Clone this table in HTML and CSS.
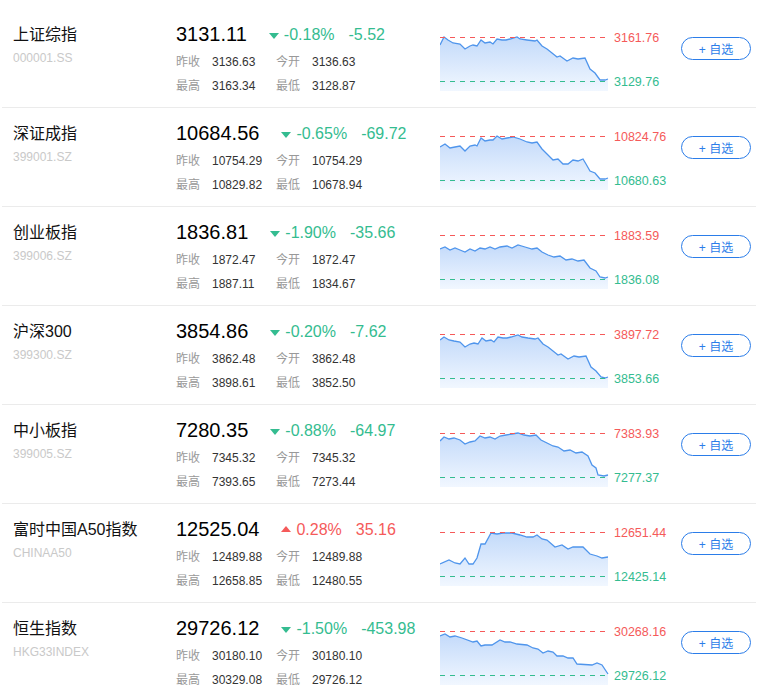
FILE: index.html
```html
<!DOCTYPE html>
<html lang="zh-CN">
<head>
  <meta charset="UTF-8">
  <meta name="viewport" content="width=device-width, initial-scale=1.0">
  <title>指数行情</title>
  <link rel="stylesheet" href="styles.css">
</head>
<body>
  <div class="list">

    <div class="row">
      <div class="name">
        <div class="title">上证综指</div>
        <div class="code">000001.SS</div>
      </div>
      <div class="quote">
        <div class="top">
          <span class="price">3131.11</span>
          <span class="arrow fall"></span>
          <span class="pct down">-0.18%</span>
          <span class="chg down">-5.52</span>
        </div>
        <div class="stats">
          <span class="k">昨收</span><span class="v">3136.63</span><span class="k">今开</span><span class="v">3136.63</span>
          <span class="k">最高</span><span class="v">3163.34</span><span class="k">最低</span><span class="v">3128.87</span>
        </div>
      </div>
      <div class="chart">
        <svg width="170" height="56" viewBox="0 0 170 56">
          <defs><linearGradient id="g1" x1="0" y1="0" x2="0" y2="1"><stop offset="0" stop-color="#c3dafa"/><stop offset="1" stop-color="#f1f7ff"/></linearGradient></defs>
          <polygon fill="url(#g1)" points="0,10 4,2 8,5 13,8 20,9 25,14 30,11 33,10 37,11 41,5 45,8 50,7 53,9 57,4 62,5 66,5 70,4 77,2 80,4 87,5 95,6 97,5 102,11 107,14 112,18 117,22 120,21 127,26 133,23 138,24 145,23 150,34 155,38 160,45 165,45 168,44 168,56 0,56"/>
          <polyline class="line" points="0,10 4,2 8,5 13,8 20,9 25,14 30,11 33,10 37,11 41,5 45,8 50,7 53,9 57,4 62,5 66,5 70,4 77,2 80,4 87,5 95,6 97,5 102,11 107,14 112,18 117,22 120,21 127,26 133,23 138,24 145,23 150,34 155,38 160,45 165,45 168,44"/>
          <line class="hiline" x1="0" y1="2.5" x2="166" y2="2.5"/>
          <line class="loline" x1="0" y1="46.5" x2="166" y2="46.5"/>
        </svg>
        <div class="marks"><span class="hi">3161.76</span><span class="lo">3129.76</span></div>
      </div>
      <button class="add">+ 自选</button>
    </div>

    <div class="row">
      <div class="name">
        <div class="title">深证成指</div>
        <div class="code">399001.SZ</div>
      </div>
      <div class="quote">
        <div class="top">
          <span class="price">10684.56</span>
          <span class="arrow fall"></span>
          <span class="pct down">-0.65%</span>
          <span class="chg down">-69.72</span>
        </div>
        <div class="stats">
          <span class="k">昨收</span><span class="v">10754.29</span><span class="k">今开</span><span class="v">10754.29</span>
          <span class="k">最高</span><span class="v">10829.82</span><span class="k">最低</span><span class="v">10678.94</span>
        </div>
      </div>
      <div class="chart">
        <svg width="170" height="56" viewBox="0 0 170 56">
          <defs><linearGradient id="g2" x1="0" y1="0" x2="0" y2="1"><stop offset="0" stop-color="#c3dafa"/><stop offset="1" stop-color="#f1f7ff"/></linearGradient></defs>
          <polygon fill="url(#g2)" points="0,13 5,10 10,14 15,13 20,12 25,17 30,12 35,11 37,12 41,4 45,7 50,6 53,6 57,2 62,5 67,4 73,3 80,5 87,8 92,9 97,8 102,15 107,20 113,26 118,25 123,30 128,30 133,26 138,27 143,25 146,30 150,37 155,39 160,45 165,45 168,44 168,56 0,56"/>
          <polyline class="line" points="0,13 5,10 10,14 15,13 20,12 25,17 30,12 35,11 37,12 41,4 45,7 50,6 53,6 57,2 62,5 67,4 73,3 80,5 87,8 92,9 97,8 102,15 107,20 113,26 118,25 123,30 128,30 133,26 138,27 143,25 146,30 150,37 155,39 160,45 165,45 168,44"/>
          <line class="hiline" x1="0" y1="2.5" x2="166" y2="2.5"/>
          <line class="loline" x1="0" y1="46.5" x2="166" y2="46.5"/>
        </svg>
        <div class="marks"><span class="hi">10824.76</span><span class="lo">10680.63</span></div>
      </div>
      <button class="add">+ 自选</button>
    </div>

    <div class="row">
      <div class="name">
        <div class="title">创业板指</div>
        <div class="code">399006.SZ</div>
      </div>
      <div class="quote">
        <div class="top">
          <span class="price">1836.81</span>
          <span class="arrow fall"></span>
          <span class="pct down">-1.90%</span>
          <span class="chg down">-35.66</span>
        </div>
        <div class="stats">
          <span class="k">昨收</span><span class="v">1872.47</span><span class="k">今开</span><span class="v">1872.47</span>
          <span class="k">最高</span><span class="v">1887.11</span><span class="k">最低</span><span class="v">1834.67</span>
        </div>
      </div>
      <div class="chart">
        <svg width="170" height="56" viewBox="0 0 170 56">
          <defs><linearGradient id="g3" x1="0" y1="0" x2="0" y2="1"><stop offset="0" stop-color="#c3dafa"/><stop offset="1" stop-color="#f1f7ff"/></linearGradient></defs>
          <polygon fill="url(#g3)" points="0,16 5,14 10,17 15,15 20,17 25,19 30,16 35,18 40,15 45,16 50,14 55,16 60,14 67,13 72,15 78,12 85,14 92,16 97,15 102,19 108,22 114,24 120,23 126,27 132,26 138,28 144,27 150,35 156,38 160,44 165,45 168,44 168,56 0,56"/>
          <polyline class="line" points="0,16 5,14 10,17 15,15 20,17 25,19 30,16 35,18 40,15 45,16 50,14 55,16 60,14 67,13 72,15 78,12 85,14 92,16 97,15 102,19 108,22 114,24 120,23 126,27 132,26 138,28 144,27 150,35 156,38 160,44 165,45 168,44"/>
          <line class="hiline" x1="0" y1="2.5" x2="166" y2="2.5"/>
          <line class="loline" x1="0" y1="46.5" x2="166" y2="46.5"/>
        </svg>
        <div class="marks"><span class="hi">1883.59</span><span class="lo">1836.08</span></div>
      </div>
      <button class="add">+ 自选</button>
    </div>

    <div class="row">
      <div class="name">
        <div class="title">沪深300</div>
        <div class="code">399300.SZ</div>
      </div>
      <div class="quote">
        <div class="top">
          <span class="price">3854.86</span>
          <span class="arrow fall"></span>
          <span class="pct down">-0.20%</span>
          <span class="chg down">-7.62</span>
        </div>
        <div class="stats">
          <span class="k">昨收</span><span class="v">3862.48</span><span class="k">今开</span><span class="v">3862.48</span>
          <span class="k">最高</span><span class="v">3898.61</span><span class="k">最低</span><span class="v">3852.50</span>
        </div>
      </div>
      <div class="chart">
        <svg width="170" height="56" viewBox="0 0 170 56">
          <defs><linearGradient id="g4" x1="0" y1="0" x2="0" y2="1"><stop offset="0" stop-color="#c3dafa"/><stop offset="1" stop-color="#f1f7ff"/></linearGradient></defs>
          <polygon fill="url(#g4)" points="0,8 4,5 9,8 14,9 20,10 25,15 30,12 34,11 38,12 42,6 46,9 51,8 54,10 58,5 63,6 67,6 71,5 78,3 82,5 88,6 95,7 98,6 103,12 108,15 113,19 118,23 121,22 128,27 134,24 139,25 146,24 151,35 156,39 161,45 165,46 168,45 168,56 0,56"/>
          <polyline class="line" points="0,8 4,5 9,8 14,9 20,10 25,15 30,12 34,11 38,12 42,6 46,9 51,8 54,10 58,5 63,6 67,6 71,5 78,3 82,5 88,6 95,7 98,6 103,12 108,15 113,19 118,23 121,22 128,27 134,24 139,25 146,24 151,35 156,39 161,45 165,46 168,45"/>
          <line class="hiline" x1="0" y1="2.5" x2="166" y2="2.5"/>
          <line class="loline" x1="0" y1="46.5" x2="166" y2="46.5"/>
        </svg>
        <div class="marks"><span class="hi">3897.72</span><span class="lo">3853.66</span></div>
      </div>
      <button class="add">+ 自选</button>
    </div>

    <div class="row">
      <div class="name">
        <div class="title">中小板指</div>
        <div class="code">399005.SZ</div>
      </div>
      <div class="quote">
        <div class="top">
          <span class="price">7280.35</span>
          <span class="arrow fall"></span>
          <span class="pct down">-0.88%</span>
          <span class="chg down">-64.97</span>
        </div>
        <div class="stats">
          <span class="k">昨收</span><span class="v">7345.32</span><span class="k">今开</span><span class="v">7345.32</span>
          <span class="k">最高</span><span class="v">7393.65</span><span class="k">最低</span><span class="v">7273.44</span>
        </div>
      </div>
      <div class="chart">
        <svg width="170" height="56" viewBox="0 0 170 56">
          <defs><linearGradient id="g5" x1="0" y1="0" x2="0" y2="1"><stop offset="0" stop-color="#c3dafa"/><stop offset="1" stop-color="#f1f7ff"/></linearGradient></defs>
          <polygon fill="url(#g5)" points="0,10 4,6 9,8 14,7 20,9 25,13 30,11 35,10 40,5 45,7 50,6 55,8 60,5 66,4 72,3 78,2 84,4 90,5 96,4 101,9 107,12 113,15 118,16 124,20 130,19 136,22 142,21 148,25 152,34 156,37 158,44 164,45 168,44 168,56 0,56"/>
          <polyline class="line" points="0,10 4,6 9,8 14,7 20,9 25,13 30,11 35,10 40,5 45,7 50,6 55,8 60,5 66,4 72,3 78,2 84,4 90,5 96,4 101,9 107,12 113,15 118,16 124,20 130,19 136,22 142,21 148,25 152,34 156,37 158,44 164,45 168,44"/>
          <line class="hiline" x1="0" y1="2.5" x2="166" y2="2.5"/>
          <line class="loline" x1="0" y1="46.5" x2="166" y2="46.5"/>
        </svg>
        <div class="marks"><span class="hi">7383.93</span><span class="lo">7277.37</span></div>
      </div>
      <button class="add">+ 自选</button>
    </div>

    <div class="row">
      <div class="name">
        <div class="title">富时中国A50指数</div>
        <div class="code">CHINAA50</div>
      </div>
      <div class="quote">
        <div class="top">
          <span class="price">12525.04</span>
          <span class="arrow rise"></span>
          <span class="pct up">0.28%</span>
          <span class="chg up">35.16</span>
        </div>
        <div class="stats">
          <span class="k">昨收</span><span class="v">12489.88</span><span class="k">今开</span><span class="v">12489.88</span>
          <span class="k">最高</span><span class="v">12658.85</span><span class="k">最低</span><span class="v">12480.55</span>
        </div>
      </div>
      <div class="chart">
        <svg width="170" height="56" viewBox="0 0 170 56">
          <defs><linearGradient id="g6" x1="0" y1="0" x2="0" y2="1"><stop offset="0" stop-color="#c3dafa"/><stop offset="1" stop-color="#f1f7ff"/></linearGradient></defs>
          <polygon fill="url(#g6)" points="0,34 9,30 15,33 20,34 25,28 29,34 33,34 37,28 41,14 45,14 51,3 57,4 63,3 72,3 80,5 87,7 93,7 97,5 102,9 107,10 115,17 122,15 128,19 133,17 143,17 150,24 157,26 162,28 168,27 168,56 0,56"/>
          <polyline class="line" points="0,34 9,30 15,33 20,34 25,28 29,34 33,34 37,28 41,14 45,14 51,3 57,4 63,3 72,3 80,5 87,7 93,7 97,5 102,9 107,10 115,17 122,15 128,19 133,17 143,17 150,24 157,26 162,28 168,27"/>
          <line class="hiline" x1="0" y1="2.5" x2="166" y2="2.5"/>
          <line class="loline" x1="0" y1="46.5" x2="166" y2="46.5"/>
        </svg>
        <div class="marks"><span class="hi">12651.44</span><span class="lo">12425.14</span></div>
      </div>
      <button class="add">+ 自选</button>
    </div>

    <div class="row">
      <div class="name">
        <div class="title">恒生指数</div>
        <div class="code">HKG33INDEX</div>
      </div>
      <div class="quote">
        <div class="top">
          <span class="price">29726.12</span>
          <span class="arrow fall"></span>
          <span class="pct down">-1.50%</span>
          <span class="chg down">-453.98</span>
        </div>
        <div class="stats">
          <span class="k">昨收</span><span class="v">30180.10</span><span class="k">今开</span><span class="v">30180.10</span>
          <span class="k">最高</span><span class="v">30329.08</span><span class="k">最低</span><span class="v">29726.12</span>
        </div>
      </div>
      <div class="chart">
        <svg width="170" height="56" viewBox="0 0 170 56">
          <defs><linearGradient id="g7" x1="0" y1="0" x2="0" y2="1"><stop offset="0" stop-color="#c3dafa"/><stop offset="1" stop-color="#f1f7ff"/></linearGradient></defs>
          <polygon fill="url(#g7)" points="0,7 5,5 10,8 15,7 22,9 33,13 37,12 41,17 45,16 52,16 60,11 65,13 70,13 77,15 87,16 93,19 98,20 103,24 108,22 113,23 117,27 123,27 128,29 133,29 137,35 152,36 157,34 162,36 168,45 168,56 0,56"/>
          <polyline class="line" points="0,7 5,5 10,8 15,7 22,9 33,13 37,12 41,17 45,16 52,16 60,11 65,13 70,13 77,15 87,16 93,19 98,20 103,24 108,22 113,23 117,27 123,27 128,29 133,29 137,35 152,36 157,34 162,36 168,45"/>
          <line class="hiline" x1="0" y1="2.5" x2="166" y2="2.5"/>
          <line class="loline" x1="0" y1="46.5" x2="166" y2="46.5"/>
        </svg>
        <div class="marks"><span class="hi">30268.16</span><span class="lo">29726.12</span></div>
      </div>
      <button class="add">+ 自选</button>
    </div>

  </div>
</body>
</html>
```

FILE: styles.css
```css
body {
  margin: 0;
  background-color: #fff;
  font-family: "Liberation Sans", "Noto Sans CJK SC", sans-serif;
  color: #333;
}
.list {
  padding: 9px 2px 0;
}
.row {
  display: flex;
  align-items: flex-start;
  height: 98px;
  border-bottom: 1px solid #ebebeb;
}
.name {
  width: 163px;
  padding: 16px 0 0 11px;
}
.title {
  font-size: 16px;
  line-height: 20px;
  color: #111;
}
.code {
  margin-top: 5px;
  font-size: 12px;
  line-height: 16px;
  color: #c9c9c9;
}
.quote {
  width: 264px;
  padding-top: 13px;
}
.top {
  display: flex;
  align-items: center;
  height: 24px;
}
.price {
  margin-right: 22px;
  font-size: 20px;
  line-height: 24px;
  color: #000;
}
.arrow {
  width: 0;
  height: 0;
  margin-right: 5px;
  border-left: 5px solid transparent;
  border-right: 5px solid transparent;
}
.arrow.fall {
  margin-top: 3px;
  border-top: 6px solid #34bc90;
}
.arrow.rise {
  margin-top: 0;
  border-bottom: 6px solid #f55a5a;
}
.pct,
.chg {
  margin-top: 2px;
  font-size: 16px;
  line-height: 20px;
}
.pct {
  margin-right: 14px;
}
.down {
  color: #34bc90;
}
.up {
  color: #f55a5a;
}
.stats {
  display: grid;
  grid-template-columns: 36px 64px 36px auto;
  margin-top: 4px;
  font-size: 12px;
  line-height: 24px;
}
.k {
  color: #999;
}
.v {
  color: #333;
}
.chart {
  display: flex;
  padding-top: 26px;
}
.chart svg {
  display: block;
  margin-right: 4px;
}
.line {
  fill: none;
  stroke: #4f95ec;
  stroke-width: 1.3;
}
.hiline,
.loline {
  stroke-width: 1;
  stroke-dasharray: 5 5;
}
.hiline {
  stroke: #f55a5a;
}
.loline {
  stroke: #34bc90;
}
.marks {
  display: flex;
  flex-direction: column;
  justify-content: space-between;
  width: 67px;
  height: 58px;
  margin-top: -4px;
  font-size: 12.5px;
  line-height: 14px;
}
.hi {
  color: #f55a5a;
}
.lo {
  color: #34bc90;
}
.add {
  width: 70px;
  height: 23px;
  margin-top: 28px;
  padding: 0;
  border: 1px solid #2b7de9;
  border-radius: 12px;
  background-color: #fff;
  color: #2b7de9;
  font-family: inherit;
  font-size: 12px;
  cursor: pointer;
}
```
